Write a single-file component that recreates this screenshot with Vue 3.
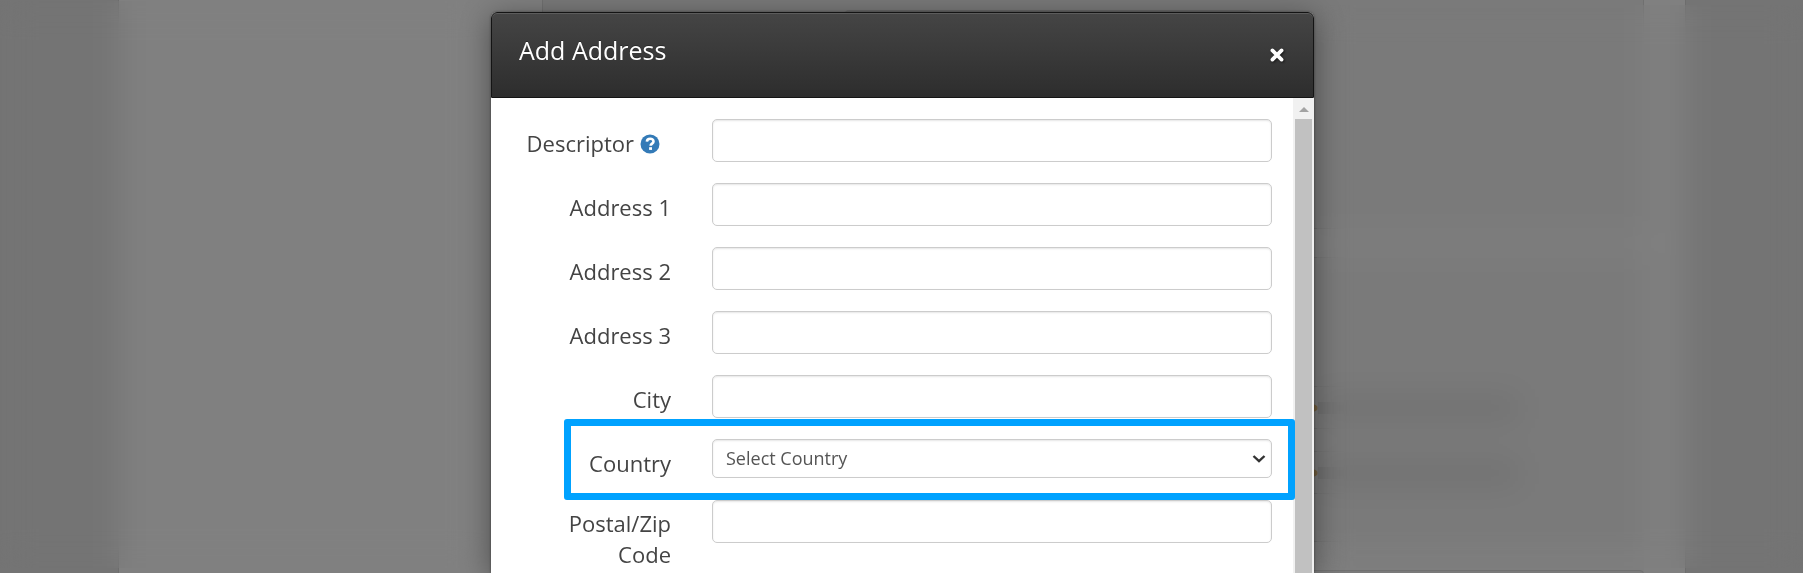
<script setup>
import { reactive, ref } from 'vue'

const fields = [
  { id: 'descriptor', label: 'Descriptor', help: true },
  { id: 'address1', label: 'Address 1' },
  { id: 'address2', label: 'Address 2' },
  { id: 'address3', label: 'Address 3' },
  { id: 'city', label: 'City' },
  { id: 'country', label: 'Country', select: true },
  { id: 'postal', label: 'Postal/Zip Code' },
]
const form = reactive({ descriptor: '', address1: '', address2: '', address3: '', city: '', country: '', postal: '' })
const open = ref(true)
</script>

<template>
  <div class="screen">
    <div class="page" aria-hidden="true">
      <div class="gutter"></div>
      <div class="side"></div>
      <div class="content">
        <div class="panel first"><div class="tab"></div></div>
        <div class="panel second">
          <div v-for="n in 2" :key="n" class="entry">
            <span class="entry-icon"></span>
            <span class="entry-bar"></span>
          </div>
        </div>
        <div class="panel third"></div>
      </div>
      <div class="margin"></div>
      <div class="gutter end"></div>
    </div>
    <div class="veil" aria-hidden="true">
      <div class="frost left"></div>
      <div class="frost right"></div>
    </div>

    <div v-if="open" class="overlay">
      <section class="modal" role="dialog" aria-labelledby="modal-title">
        <header class="modal-header">
          <h1 id="modal-title">Add Address</h1>
          <button type="button" class="close" aria-label="Close" @click="open = false">
            <svg width="14" height="14" viewBox="0 0 14 14">
              <path d="M2.4 2.4L11.6 11.6M11.6 2.4L2.4 11.6" stroke="#fff" stroke-width="3.7" stroke-linecap="round" />
            </svg>
          </button>
        </header>
        <div class="modal-body">
          <form class="form" @submit.prevent>
            <div v-for="f in fields" :key="f.id" class="row" :class="{ highlighted: f.select }">
              <div class="label-cell" :class="{ 'with-help': f.help }">
                <label :for="f.id">{{ f.label }}</label>
                <button v-if="f.help" type="button" class="help" aria-label="Help">
                  <svg width="20" height="20" viewBox="0 0 20 20">
                    <circle cx="10" cy="10" r="9.5" fill="#337ab7" />
                    <path d="M6.9 7.6C7 5.6 8.4 4.7 10.2 4.7c1.900 0 3.300 1 3.300 2.700 0 2.200-2.900 2.200-2.900 4.400" fill="none" stroke="#fff" stroke-width="2.600" />
                    <rect x="9.100" y="13.200" width="2.900" height="2.700" fill="#fff" />
                  </svg>
                </button>
              </div>
              <div v-if="f.select" class="select-wrap">
                <select :id="f.id" v-model="form[f.id]" class="control">
                  <option value="">Select Country</option>
                </select>
                <svg class="chevron" width="14" height="10" viewBox="0 0 14 10">
                  <path d="M1.500 2L7 7.200L12.500 2" fill="none" stroke="#333" stroke-width="2.400" />
                </svg>
              </div>
              <input v-else :id="f.id" v-model="form[f.id]" type="text" class="control" />
            </div>
          </form>
          <div class="scrollbar" aria-hidden="true">
            <svg width="10" height="5" viewBox="0 0 10 5"><path d="M5 0L10 5H0Z" fill="#a3a3a3" /></svg>
            <div class="thumb"></div>
          </div>
        </div>
      </section>
    </div>
  </div>
</template>

<style>
body {
  background: #747474;
}
</style>

<style scoped>
* {
  box-sizing: border-box;
}
.screen {
  position: relative;
  height: 100vh;
  overflow: hidden;
  font-family: "Open Sans", "Noto Sans", sans-serif;
  color: #444;
}
.page {
  height: 100%;
  display: grid;
  grid-template-columns: 119fr 423fr 1102fr 41fr 118fr;
  background: #808080;
}
.gutter {
  background: #747474;
  border-right: 1px solid #6d6d6d;
}
.gutter.end {
  border-right: 0;
  border-left: 1px solid #6d6d6d;
}
.content {
  display: flex;
  flex-direction: column;
  gap: 28px;
  background: #7e7e7e;
}
.panel {
  flex: none;
  background: #7a7a7a;
  border: 1px solid #707070;
}
.first {
  height: 229px;
  border-top: 0;
  padding-top: 10px;
}
.tab {
  width: 408px;
  height: 40px;
  margin-left: 301px;
  border-radius: 5px;
  background: #6c6c6c;
}
.second {
  height: 285px;
  padding: 128px 124px 0 760px;
  display: flex;
  flex-direction: column;
  gap: 22px;
}
.third {
  height: 40px;
  border-radius: 4px;
}
.entry {
  height: 43px;
  border: 1px solid #707070;
  border-right: 0;
  display: flex;
  align-items: center;
}
.entry-icon {
  width: 14px;
  height: 8px;
  border-radius: 50%;
  background: #74603f;
}
.entry-bar {
  flex: 1;
  height: 12px;
  background: #6a6a6a;
}
.veil {
  position: absolute;
  inset: 0;
  display: flex;
  justify-content: space-between;
}
.frost {
  margin-bottom: 5px;
  backdrop-filter: blur(16px);
}
.left {
  width: 484px;
  margin-top: 1px;
}
.right {
  width: 486px;
  margin-top: 5px;
}
.overlay {
  position: absolute;
  inset: 0;
  padding: 12px 0 0 2px;
  display: flex;
  justify-content: center;
}
.modal {
  width: 100%;
  max-width: 823px;
  display: flex;
  flex-direction: column;
  border-radius: 6px 6px 0 0;
  background: #fff;
  box-shadow: 0 5px 30px rgba(0, 0, 0, 0.4), 0 0 3px rgba(0, 0, 0, 0.4);
}
.modal-header {
  height: 86px;
  padding: 17px 27px 0;
  display: flex;
  justify-content: space-between;
  align-items: flex-start;
  border: 1px solid #141414;
  border-radius: 6px 6px 0 0;
  background: linear-gradient(#454545, #2d2d2d);
  box-shadow: inset 0 1px 0 #5c5c5c;
}
h1 {
  margin: 0;
  font-size: 25px;
  font-weight: 400;
  line-height: 40px;
  color: #fff;
  text-shadow: 0 -1px 0 rgba(0, 0, 0, 0.3);
}
button {
  padding: 0;
  border: 0;
  background: none;
  display: flex;
  cursor: pointer;
}
.close {
  margin-top: 18px;
  margin-right: 2px;
  filter: drop-shadow(1px 1px 1px rgba(0, 0, 0, 0.6));
}
.modal-body {
  flex: 1;
  min-height: 0;
  display: flex;
  overflow: hidden;
}
.form {
  flex: 1;
  padding: 21px 21px 0 28px;
  display: flex;
  flex-direction: column;
  gap: 21px;
}
.row {
  position: relative;
  display: grid;
  grid-template-columns: 152px 1fr;
  column-gap: 41px;
  align-items: start;
}
.label-cell {
  height: 40px;
  padding-top: 9px;
  display: flex;
  justify-content: flex-end;
  align-items: flex-start;
  gap: 6px;
  font-size: 22px;
  line-height: 31px;
  text-align: right;
}
.label-cell.with-help {
  padding-right: 11px;
}
.help {
  margin-top: 6px;
}
.row:last-child .label-cell {
  height: auto;
  padding: 8px 0 0 40px;
}
.control {
  width: 100%;
  height: 43px;
  padding: 0 13px;
  border: 1px solid #ccc;
  border-radius: 5px;
  background: #fff;
  box-shadow: inset 0 1px 2px rgba(0, 0, 0, 0.1);
  font: 18px "Open Sans", "Noto Sans", sans-serif;
  color: #555;
  outline: 0;
}
.select-wrap {
  position: relative;
}
select.control {
  display: block;
  height: 39px;
  padding-bottom: 2px;
  appearance: none;
}
.chevron {
  position: absolute;
  right: 6px;
  top: 15px;
  pointer-events: none;
}
.highlighted::after {
  content: "";
  position: absolute;
  z-index: 1;
  inset: -20px -23px -21px 45px;
  border: 7px solid #00a2ff;
  border-radius: 3px;
  pointer-events: none;
}
.scrollbar {
  width: 21px;
  padding: 9px 2px 0;
  display: flex;
  flex-direction: column;
  align-items: center;
  gap: 7px;
  background: #f1f1f1;
}
.thumb {
  flex: 1;
  width: 100%;
  background: #c1c1c1;
}
</style>
